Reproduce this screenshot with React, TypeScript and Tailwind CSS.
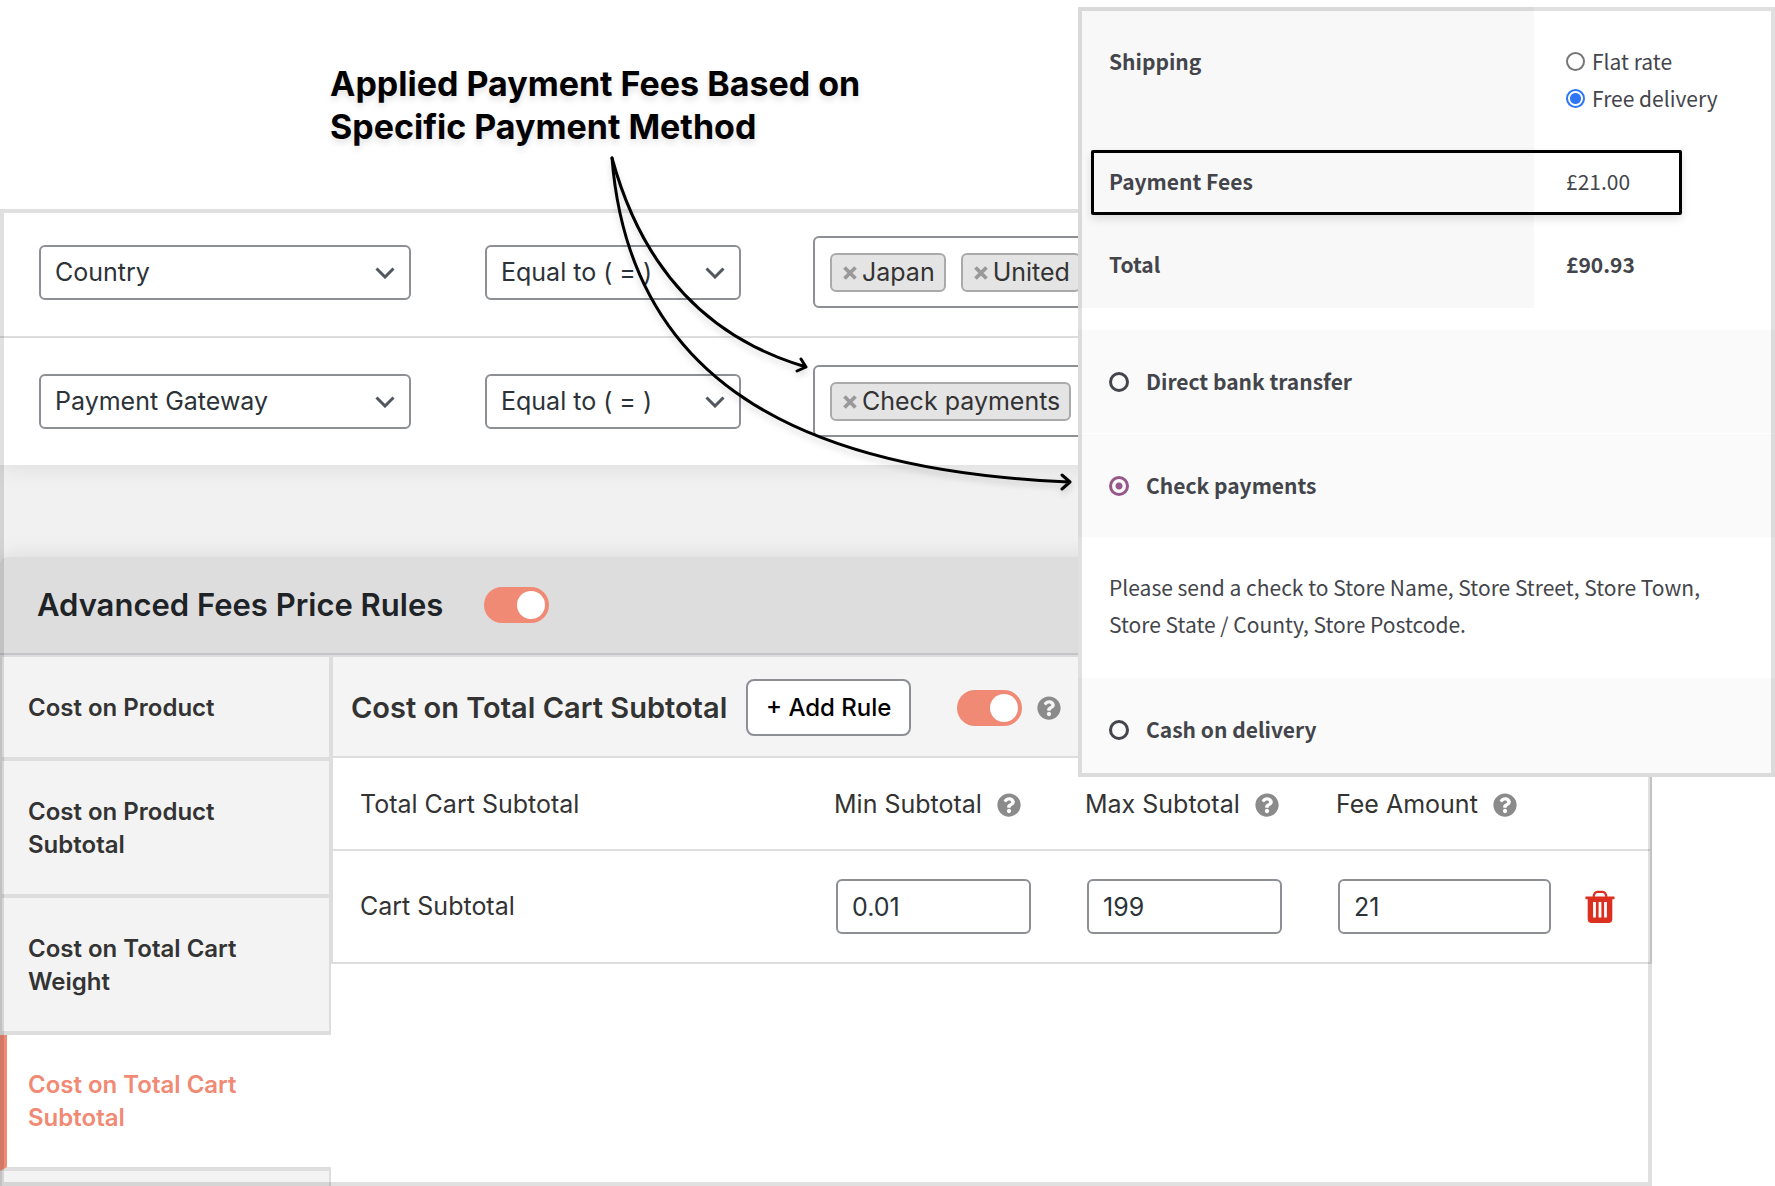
import React from "react";

const TABS = [
  { label: "Cost on Product", active: false },
  { label: "Cost on Product Subtotal", active: false },
  { label: "Cost on Total Cart Weight", active: false },
  { label: "Cost on Total Cart Subtotal", active: true },
];

const HELP_PATH =
  "M504 256c0 136.997-111.043 248-248 248S8 392.997 8 256C8 119.083 119.043 8 256 8s248 111.083 248 248zM262.655 90c-54.497 0-89.255 22.957-116.549 63.758-3.536 5.286-2.353 12.415 2.715 16.258l34.699 26.31c5.205 3.947 12.621 3.008 16.665-2.122 17.864-22.658 30.113-35.797 57.303-35.797 20.429 0 45.698 13.148 45.698 32.958 0 14.976-12.363 22.667-32.534 33.976C247.128 238.528 216 254.941 216 296v4c0 6.627 5.373 12 12 12h56c6.627 0 12-5.373 12-12v-1.333c0-28.462 83.186-29.647 83.186-106.667 0-58.002-60.165-102-116.531-102zM256 338c-25.365 0-46 20.635-46 46 0 25.364 20.635 46 46 46s46-20.636 46-46c0-25.365-20.635-46-46-46z";

function HelpIcon() {
  return (
    <svg viewBox="0 0 512 512" className="size-6 shrink-0 fill-[#8b8b8b]" aria-hidden="true">
      <path d={HELP_PATH} />
    </svg>
  );
}

function TrashIcon() {
  return (
    <svg viewBox="0 0 30 33" className="h-[33px] w-[30px]" aria-hidden="true">
      <path d="M8.500 7c.5-3.500 2-5.200 4-5.200h5c2 0 3.500 1.700 4 5.200" fill="none" stroke="#dc2f1f" strokeWidth="2.200" />
      <path d="M.5 6.500h29v2.700h-2.200V29a4 4 0 0 1-4 4H6.700a4 4 0 0 1-4-4V9.200H.5z" fill="#dc2f1f" />
      <path d="M9.500 12v15.500M15 12v15.500M20.500 12v15.500" stroke="#ffffff" strokeWidth="2.800" />
    </svg>
  );
}

function Toggle({ label }: { label: string }) {
  return (
    <label className="relative inline-flex h-9 w-[65px] shrink-0 items-center rounded-full bg-[#f08a74]">
      <input type="checkbox" role="switch" defaultChecked aria-label={label} className="absolute inset-0 size-full appearance-none rounded-full" />
      <span className="pointer-events-none ml-auto mr-1 size-7 rounded-full bg-white" />
    </label>
  );
}

function Select({ label, value, size }: { label: string; value: string; size: string }) {
  return (
    <div className={`relative ${size}`}>
      <select
        aria-label={label}
        defaultValue={value}
        className="h-[55px] w-full appearance-none rounded-md border-2 border-[#8c8f94] bg-white pt-0.5 pr-12 pl-3.5 text-[25px] text-[#2c3338]"
      >
        <option>{value}</option>
      </select>
      <svg viewBox="0 0 20 12" className="pointer-events-none absolute top-[22px] right-4 h-3 w-5" aria-hidden="true">
        <path d="M1.500 1.500 10 10l8.500-8.500" fill="none" stroke="#50575e" strokeWidth="3" />
      </svg>
    </div>
  );
}

function Tag({ children }: { children: string }) {
  return (
    <li className="flex h-[39px] shrink-0 items-center gap-[5px] rounded-md border-2 border-[#aaaaaa] bg-[#e4e4e4] pt-0.5 pr-[9px] pl-[11px] text-[25px] whitespace-nowrap text-[#333333]">
      <button type="button" aria-label={`Remove ${children}`} className="flex">
        <svg viewBox="0 0 14 14" className="size-3.5" aria-hidden="true">
          <path d="M1.500 1.500l11 11M12.500 1.500l-11 11" stroke="#999999" strokeWidth="3.800" />
        </svg>
      </button>
      <span className="min-w-[72px]">{children}</span>
    </li>
  );
}

function ConditionRow({ field, tags, last }: { field: string; tags: string[]; last?: boolean }) {
  return (
    <div className={`flex items-center pt-[27px] pb-7 pl-[39px] ${last ? "" : "border-b-2 border-[#dddddd]"}`}>
      <Select label="Condition" value={field} size="w-[372px] mr-[74px]" />
      <Select label={`${field} operator`} value="Equal to ( = )" size="w-[256px] mr-[72px]" />
      <ul className="flex h-[72px] flex-1 items-center gap-[15px] overflow-hidden rounded-md border-2 border-[#8c8f94] bg-white pl-[15px]">
        {tags.map((t) => (
          <Tag key={t}>{t}</Tag>
        ))}
      </ul>
    </div>
  );
}

function HeadCell({ children }: { children: string }) {
  return (
    <th scope="col" className="pt-0.5 text-left font-normal">
      <span className="flex items-center gap-[15px] whitespace-nowrap">
        {children}
        <HelpIcon />
      </span>
    </th>
  );
}

function NumberCell({ label, value, size }: { label: string; value: string; size: string }) {
  return (
    <td className="pl-0.5">
      <input
        type="text"
        aria-label={label}
        defaultValue={value}
        className={`block h-[55px] rounded-md border-2 border-[#8c8f94] bg-white px-3.5 text-[25px] text-[#2c3338] ${size}`}
      />
    </td>
  );
}

function FeesPanel() {
  return (
    <section className="relative mr-[123px] overflow-hidden bg-white">
      <div className="bg-[#f1f1f1]">
        <div className="bg-white shadow-[0_0_24px_rgba(0,0,0,0.1)]">
          <ConditionRow field="Country" tags={["Japan", "United"]} />
          <ConditionRow field="Payment Gateway" tags={["Check payments"]} last />
        </div>
        <div className="h-[92px]" />
        <header className="flex h-[98px] items-center gap-[41px] rounded-t-lg border-b-2 border-[#c3c4c7] bg-[#dddddd] pl-[37px] shadow-[0_0_24px_rgba(0,0,0,0.1)]">
          <h2 className="text-[31px] font-semibold text-[#1d2327]">Advanced Fees Price Rules</h2>
          <Toggle label="Advanced fees price rules" />
        </header>
      </div>

      <div className="flex border-t-2 border-[#dddddd]">
        <nav className="w-[331px] shrink-0" aria-label="Price rules">
          {TABS.map((t) => (
            <a
              key={t.label}
              href="#"
              className={
                t.active
                  ? "block border-b-4 border-l-[7px] border-b-[#dddddd] border-l-[#f08a74] bg-white py-[33px] pr-12 pl-[21px] text-2xl leading-[33px] font-semibold text-[#f08a74]"
                  : "block border-x-2 border-b-4 border-[#dddddd] bg-[#f3f3f3] pt-[34px] pr-12 pb-[33px] pl-[26px] text-2xl leading-[33px] font-semibold text-[#333333]"
              }
            >
              {t.label}
            </a>
          ))}
          <div className="h-[15px] border-x-2 border-[#dddddd] bg-[#f3f3f3]" />
        </nav>

        <div className="min-w-0 flex-1">
          <div className="border-x-2 border-b-2 border-[#dddddd]">
            <div className="flex h-[101px] items-center border-b-2 border-[#dddddd] bg-[#f4f4f4] pt-0.5 pl-[18px]">
              <h3 className="text-[29px] font-semibold whitespace-nowrap text-[#333333]">Cost on Total Cart Subtotal</h3>
              <button type="button" className="mr-[46px] ml-[19px] h-[57px] w-[165px] shrink-0 rounded-lg border-2 border-[#8c8f94] bg-white text-2xl font-medium text-black">
                + Add Rule
              </button>
              <Toggle label="Cost on total cart subtotal" />
              <span className="ml-[15px]">
                <HelpIcon />
              </span>
            </div>
            <table className="w-full table-fixed text-[25px] text-[#333333]">
              <colgroup>
                <col />
                <col className="w-[251px]" />
                <col className="w-[251px]" />
                <col className="w-[248px]" />
                <col className="w-[66px]" />
              </colgroup>
              <thead>
                <tr className="h-[92px] border-b-2 border-[#dddddd]">
                  <th scope="col" className="pt-0.5 pl-[27px] text-left font-normal">Total Cart Subtotal</th>
                  <HeadCell>Min Subtotal</HeadCell>
                  <HeadCell>Max Subtotal</HeadCell>
                  <HeadCell>Fee Amount</HeadCell>
                  <td />
                </tr>
              </thead>
              <tbody>
                <tr className="h-28">
                  <td className="pl-[27px]">Cart Subtotal</td>
                  <NumberCell label="Min subtotal" value="0.01" size="w-[195px]" />
                  <NumberCell label="Max subtotal" value="199" size="w-[195px]" />
                  <NumberCell label="Fee amount" value="21" size="w-[213px]" />
                  <td className="pl-px">
                    <button type="button" aria-label="Delete rule" className="flex">
                      <TrashIcon />
                    </button>
                  </td>
                </tr>
              </tbody>
            </table>
          </div>
        </div>
      </div>
      <div className="pointer-events-none absolute inset-0 border-4 border-black/12" />
    </section>
  );
}

function PaymentOption({ id, label, checked, size }: { id: string; label: string; checked?: boolean; size: string }) {
  return (
    <div className={`flex items-center gap-[17px] bg-[#fafafa] pl-[31px] ${size}`}>
      <input
        id={id}
        type="radio"
        name="payment"
        defaultChecked={checked}
        className="size-5 shrink-0 appearance-none rounded-full border-3 border-[#43454b] checked:border-[#96588a] checked:bg-[radial-gradient(circle,#96588a_0_3px,transparent_4px)]"
      />
      <label htmlFor={id} className="font-bold">{label}</label>
    </div>
  );
}

function CheckoutCard() {
  return (
    <aside className="absolute top-[7px] right-0 w-[697px] overflow-hidden bg-white font-['Noto_Sans_CJK_SC',sans-serif] text-[21px] leading-[37px] text-[#43454b]">
      <table className="w-full text-left">
        <colgroup>
          <col className="w-[456px]" />
          <col />
        </colgroup>
        <tbody>
          <tr className="align-top">
            <th scope="row" className="bg-[#f8f8f8] pt-9 pb-[23px] pl-[31px] font-bold">Shipping</th>
            <td className="pt-9 pb-[23px] pl-8">
              <label className="flex items-center gap-[7px]">
                <input type="radio" name="shipping" className="size-[19px] appearance-none rounded-full border-2 border-[#767676] bg-white" />
                Flat rate
              </label>
              <label className="flex items-center gap-[7px]">
                <input type="radio" name="shipping" defaultChecked className="size-[19px] appearance-none rounded-full border-2 border-[#2f76f6] bg-[radial-gradient(circle,#2f76f6_0_5px,white_6px)]" />
                Free delivery
              </label>
            </td>
          </tr>
          <tr>
            <th scope="row" className="bg-[#f8f8f8] py-[23px] pl-[31px] font-bold">Payment Fees</th>
            <td className="py-[23px] pl-8">£21.00</td>
          </tr>
          <tr>
            <th scope="row" className="bg-[#f8f8f8] pt-[23px] pb-[25px] pl-[31px] font-bold">Total</th>
            <td className="pt-[23px] pb-[25px] pl-8 font-bold">£90.93</td>
          </tr>
        </tbody>
      </table>
      <div className="pointer-events-none absolute top-[143px] left-[13px] h-[65px] w-[591px] rounded-xs border-3 border-black shadow-[0_4px_8px_rgba(0,0,0,0.12)]" />
      <div className="mt-[22px] flex flex-col gap-px">
        <PaymentOption id="bank" label="Direct bank transfer" size="h-[103px]" />
        <PaymentOption id="check" label="Check payments" checked size="h-[103px]" />
      </div>
      <p className="pt-8 pr-16 pb-[35px] pl-[31px]">Please send a check to Store Name, Store Street, Store Town, Store State / County, Store Postcode.</p>
      <PaymentOption id="cash" label="Cash on delivery" size="h-[99px] pt-1" />
      <div className="pointer-events-none absolute inset-0 border-4 border-black/12" />
    </aside>
  );
}

export default function App() {
  return (
    <main className="relative overflow-hidden bg-white font-['Inter',sans-serif]">
      <h1 className="pt-[62px] pb-[61px] pl-[330px] text-[34px] leading-[43px] font-bold text-black [text-shadow:0_4px_6px_rgba(0,0,0,0.12)]">
        Applied Payment Fees Based on
        <br />
        Specific Payment Method
      </h1>
      <FeesPanel />
      <CheckoutCard />
      <svg
        viewBox="0 0 480 350"
        className="pointer-events-none absolute top-[150px] left-[600px] h-[350px] w-[480px] drop-shadow-[0_4px_3px_rgba(0,0,0,0.15)]"
        fill="none"
        stroke="#000000"
        strokeWidth="3"
        strokeLinecap="round"
        strokeLinejoin="round"
        aria-hidden="true"
      >
        <path d="M12 8C42 118 107 188 206 217M201 209l5 8-9 4" />
        <path d="M12 8C28 212 172 320 469 332M462 325l8 7-8 7" />
      </svg>
    </main>
  );
}
